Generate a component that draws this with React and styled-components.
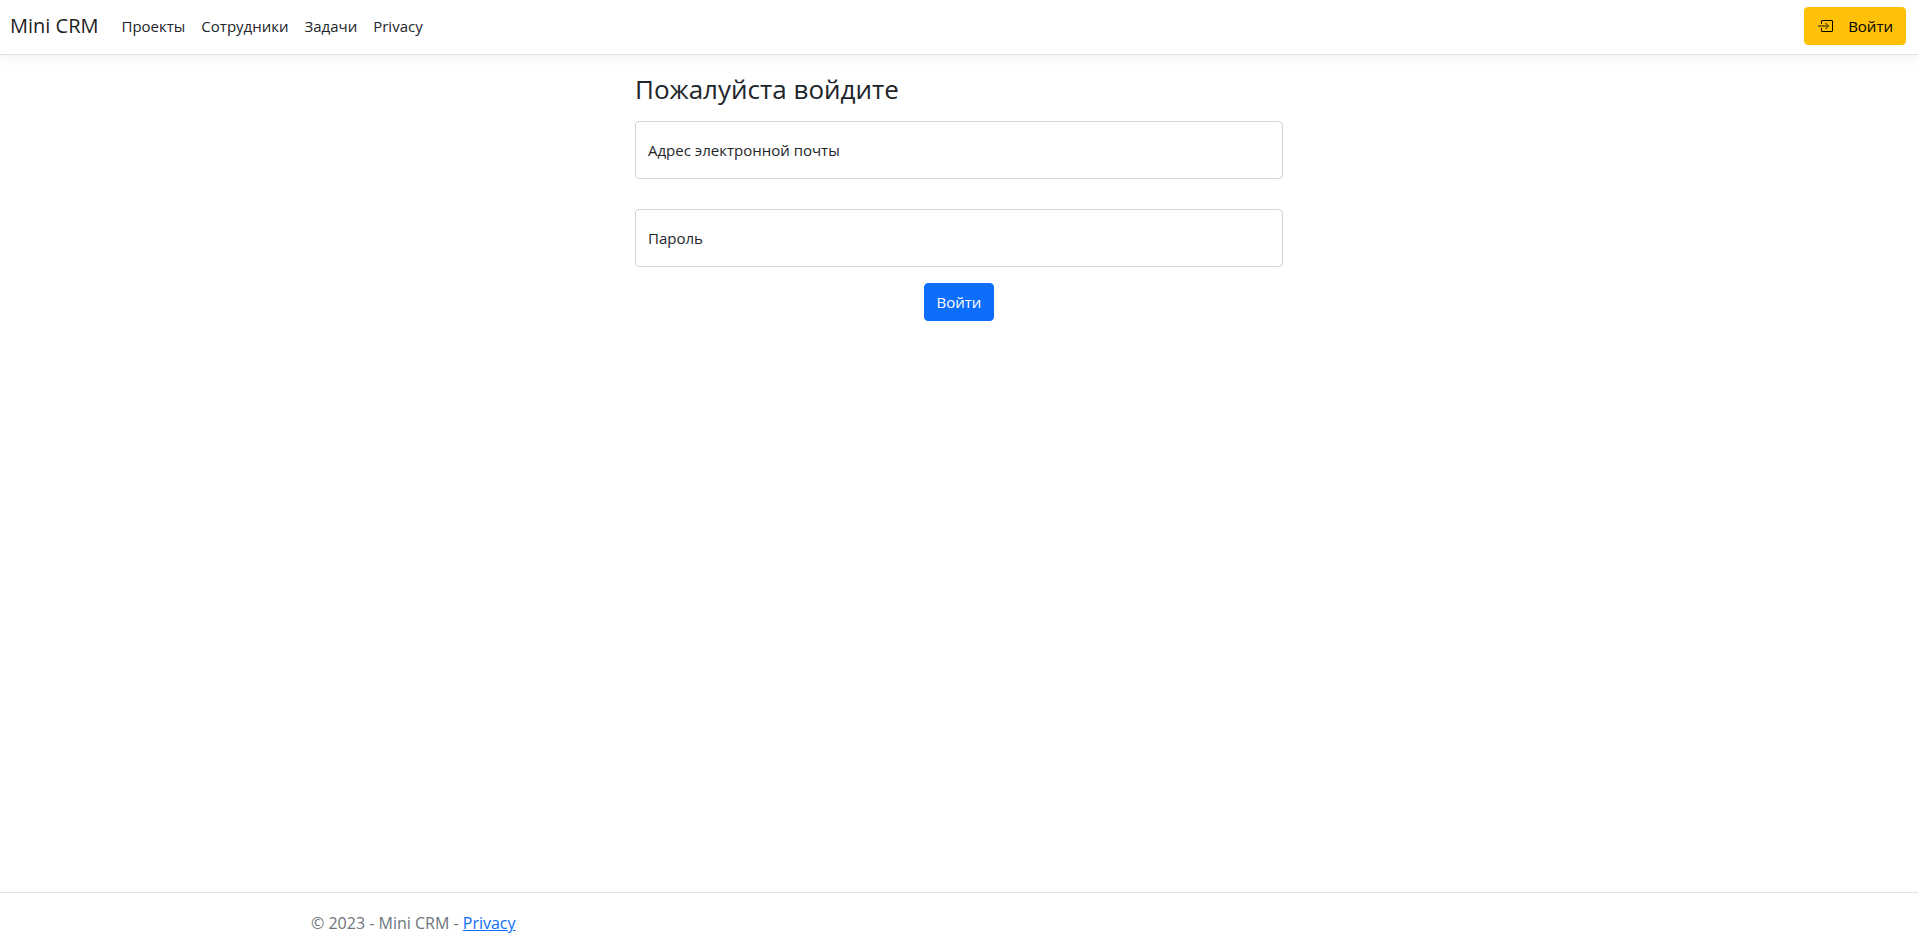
import React from "react";
import styled, { createGlobalStyle } from "styled-components";

const GlobalStyle = createGlobalStyle`
  *, *::before, *::after { box-sizing: border-box; }
  body {
    margin: 0;
    color: #212529;
    background: #fff;
    font: 400 15px/24px "Open Sans", "Noto Sans", sans-serif;
  }
`;

const Page = styled.div`
  display: flex;
  flex-direction: column;
  min-height: 100vh;
`;

const Navbar = styled.nav`
  display: flex;
  align-items: center;
  padding: 6px 12px 8px 10px;
  border-bottom: 1px solid #dee2e6;
  box-shadow: 0 4px 12px rgba(0, 0, 0, 0.05);
`;

const Brand = styled.a`
  margin-right: 15px;
  font-size: 20px;
  line-height: 30px;
  color: rgba(0, 0, 0, 0.9);
  text-decoration: none;
`;

const NavList = styled.ul`
  display: flex;
  flex: 1;
  margin: 0;
  padding: 0;
  list-style: none;
`;

const NavLink = styled.a`
  display: block;
  padding: 8px;
  color: #212529;
  text-decoration: none;
`;

const Button = styled.button`
  display: inline-flex;
  align-items: center;
  gap: 15px;
  padding: 6px 12px;
  border: 1px solid ${(p) => (p.$warning ? "#ffc107" : "#0d6efd")};
  border-radius: 4px;
  background: ${(p) => (p.$warning ? "#ffc107" : "#0d6efd")};
  color: ${(p) => (p.$warning ? "#000" : "#fff")};
  font: inherit;
  cursor: pointer;
`;

const Form = styled.form`
  flex: 1;
  width: 34%;
  max-width: 648px;
  margin: 0 auto;
  padding-top: 16px;
`;

const Title = styled.h1`
  margin: 0 0 14px;
  font-size: 26px;
  font-weight: 400;
  line-height: 36px;
`;

const Field = styled.div`
  position: relative;
  margin-bottom: ${(p) => (p.$last ? "16px" : "30px")};
`;

const Input = styled.input`
  display: block;
  width: 100%;
  height: 58px;
  padding: 16px 12px;
  border: 1px solid #ced4da;
  border-radius: 4px;
  font: inherit;
`;

const Label = styled.label`
  position: absolute;
  top: 17px;
  left: 13px;
  pointer-events: none;
`;

const Actions = styled.div`
  display: flex;
  justify-content: center;
`;

const Footer = styled.footer`
  padding: 18px 0 15px;
  border-top: 1px solid #dee2e6;
  color: #6c757d;
  font-size: 16px;
`;

const Container = styled.div`
  max-width: 1320px;
  margin: 0 auto;
  padding: 0 12px;
`;

const FooterLink = styled.a`
  color: #0d6efd;
`;

const links = ["Проекты", "Сотрудники", "Задачи", "Privacy"];

function LoginIcon() {
  return (
    <svg width="16" height="16" viewBox="0 0 16 16" fill="none" stroke="currentColor" aria-hidden="true">
      <path d="M4.5 6V3q0-.5.5-.5h10q.5 0 .5.5v10q0 .5-.5.5H5q-.5 0-.5-.5v-3" />
      <path d="M8.5 5l3 3-3 3" />
      <path d="M1 8h9" strokeWidth="2" opacity="0.45" />
    </svg>
  );
}

export default function App() {
  return (
    <Page>
      <GlobalStyle />
      <Navbar>
        <Brand href="#">Mini CRM</Brand>
        <NavList>
          {links.map((text) => (
            <li key={text}>
              <NavLink href="#">{text}</NavLink>
            </li>
          ))}
        </NavList>
        <Button type="button" $warning>
          <LoginIcon />
          Войти
        </Button>
      </Navbar>
      <Form>
        <Title>Пожалуйста войдите</Title>
        <Field>
          <Input id="email" type="email" />
          <Label htmlFor="email">Адрес электронной почты</Label>
        </Field>
        <Field $last>
          <Input id="password" type="password" />
          <Label htmlFor="password">Пароль</Label>
        </Field>
        <Actions>
          <Button type="submit">Войти</Button>
        </Actions>
      </Form>
      <Footer>
        <Container>
          © 2023 - Mini CRM - <FooterLink href="#">Privacy</FooterLink>
        </Container>
      </Footer>
    </Page>
  );
}
